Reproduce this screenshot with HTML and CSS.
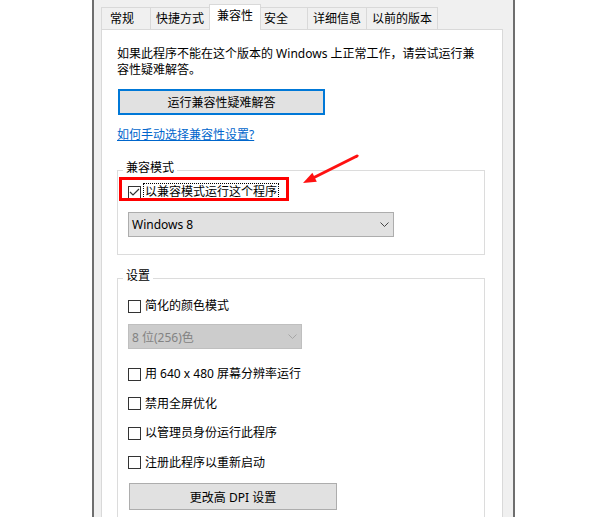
FILE: index.html
```html
<!DOCTYPE html>
<html lang="zh-CN">
<head>
  <meta charset="UTF-8" />
  <title>属性 - 兼容性</title>
  <link rel="stylesheet" href="styles.css">
</head>
<body>
  <div class="dialog">
    <div class="tabs">
      <div class="tab">常规</div>
      <div class="tab">快捷方式</div>
      <div class="tab active">兼容性</div>
      <div class="tab">安全</div>
      <div class="tab">详细信息</div>
      <div class="tab">以前的版本</div>
    </div>

    <div class="panel">
      <p class="intro">如果此程序不能在这个版本的 Windows 上正常工作，请尝试运行兼<br>容性疑难解答。</p>
      <button class="btn btn-run">运行兼容性疑难解答</button>
      <a class="help-link" href="#">如何手动选择兼容性设置?</a>

      <fieldset class="group group-mode">
        <legend>兼容模式</legend>
        <div class="check-row first">
          <span class="box">
            <svg width="11" height="11" viewBox="0 0 11 11"><polyline points="1,5 4,8 10,2" fill="none" stroke="#333" stroke-width="1.2"/></svg>
          </span>
          <span class="label focused">以兼容模式运行这个程序</span>
        </div>
        <div class="select select-os">
          <span>Windows 8</span>
          <svg width="9" height="5" viewBox="0 0 9 5"><polyline points="0.5,0.5 4.5,4.5 8.5,0.5" fill="none" stroke="#444"/></svg>
        </div>
      </fieldset>

      <fieldset class="group group-settings">
        <legend>设置</legend>
        <div class="check-row first">
          <span class="box"></span>
          <span class="label">简化的颜色模式</span>
        </div>
        <div class="select select-color disabled">
          <span>8 位(256)色</span>
          <svg width="9" height="5" viewBox="0 0 9 5"><polyline points="0.5,0.5 4.5,4.5 8.5,0.5" fill="none" stroke="#a6a6a6"/></svg>
        </div>
        <div class="check-row after-select">
          <span class="box"></span>
          <span class="label">用 640 x 480 屏幕分辨率运行</span>
        </div>
        <div class="check-row">
          <span class="box"></span>
          <span class="label">禁用全屏优化</span>
        </div>
        <div class="check-row">
          <span class="box"></span>
          <span class="label">以管理员身份运行此程序</span>
        </div>
        <div class="check-row">
          <span class="box"></span>
          <span class="label">注册此程序以重新启动</span>
        </div>
        <button class="btn btn-dpi">更改高 DPI 设置</button>
      </fieldset>
    </div>
  </div>

  <!-- red annotation drawn over the screenshot -->
  <svg class="annotation" width="600" height="517" viewBox="0 0 600 517">
    <rect x="120.5" y="178.5" width="167" height="21" fill="none" stroke="#f00" stroke-width="3"/>
    <line x1="357" y1="156" x2="313" y2="178" stroke="#f11" stroke-width="3" stroke-linecap="round"/>
    <polygon points="303,183 312.4,172.7 316.8,181.7" fill="#f11"/>
  </svg>
</body>
</html>
```

FILE: styles.css
```css
body {
  margin: 0;
  background: #fff;
  font-family: "Noto Sans", "Noto Sans CJK SC", sans-serif;
  font-size: 12px;
  color: #000;
}

.dialog {
  box-sizing: border-box;
  width: 423px;
  height: 517px;
  margin-left: 92px;
  padding: 4px 10px 0 7px;
  background: #f0f0f0;
  border-left: 2px solid #6e6e6e;
  border-right: 2px solid #6e6e6e;
  display: flex;
  flex-direction: column;
  overflow: hidden;
}

/* tab strip */
.tabs {
  display: flex;
  align-items: flex-end;
  height: 26px;
  margin-bottom: -1px;
  position: relative;
  z-index: 1;
}

.tab {
  box-sizing: border-box;
  height: 22px;
  min-width: 50px;
  margin: 0 0 1px -1px;
  padding: 0 5px;
  border: 1px solid #d9d9d9;
  border-bottom: none;
  background: #f0f0f0;
  line-height: 21px;
  white-space: nowrap;
}

.tab:first-child {
  margin-left: 0;
  padding-left: 8px;
}

.tab.active {
  height: 26px;
  margin: 0 -2px 0 -1px;
  padding: 0 7px;
  background: #fff;
  line-height: 22px;
  position: relative;
  z-index: 1;
}

.panel {
  flex: 1;
  background: #fff;
  border: 1px solid #d9d9d9;
  padding: 0 15px;
}

.intro {
  margin: 16px 0 0;
  line-height: 16px;
}

.btn {
  display: block;
  box-sizing: border-box;
  padding: 0;
  font: inherit;
  color: #000;
  background: #e1e1e1;
  border: 1px solid #adadad;
  text-align: center;
}

.btn-run {
  width: 207px;
  height: 26px;
  margin: 11px 0 0 1px;
  border: 2px solid #0078d7;
}

.help-link {
  display: block;
  width: max-content;
  margin-top: 12px;
  line-height: 16px;
  color: #0066cc;
  text-decoration: underline;
}

/* group boxes */
.group {
  min-width: 0;
  margin: 0 2px 0 0;
  padding: 0 0 17px 10px;
  border: 1px solid #dcdcdc;
}

.group legend {
  margin-left: -5px;
  padding: 0 3px 4px;
  line-height: 16px;
}

.group-mode {
  margin-top: 17px;
}

.group-settings {
  margin-top: 13px;
  padding-bottom: 30px;
}

.check-row {
  display: flex;
  align-items: center;
  height: 18px;
  margin-top: 11.5px;
}

.group-mode .check-row.first {
  margin-top: 3px;
}

.group-settings .check-row.first {
  margin-top: 9px;
}

.check-row.after-select {
  margin-top: 16px;
}

.box {
  box-sizing: border-box;
  flex: none;
  width: 13px;
  height: 13px;
  border: 1px solid #333;
  background: #fff;
}

.box svg {
  display: block;
}

.label {
  margin-left: 2px;
  padding: 0 1px;
  border: 1px dotted transparent;
  line-height: 16px;
  white-space: nowrap;
}

.label.focused {
  border-color: #000;
}

.select {
  box-sizing: border-box;
  display: flex;
  align-items: center;
  justify-content: space-between;
  height: 25px;
  padding: 0 4px 0 3px;
  border: 1px solid #adadad;
  background: #e1e1e1;
}

.select-os {
  width: 266px;
  margin-top: 11px;
}

.select-color {
  width: 174px;
  margin-top: 9px;
}

.select.disabled {
  background: #cccccc;
  border-color: #bfbfbf;
  color: #838383;
}

.btn-dpi {
  width: 208px;
  height: 27px;
  margin: 11.5px 0 0 1px;
}

.annotation {
  position: absolute;
  top: 0;
  left: 0;
  pointer-events: none;
}
```
